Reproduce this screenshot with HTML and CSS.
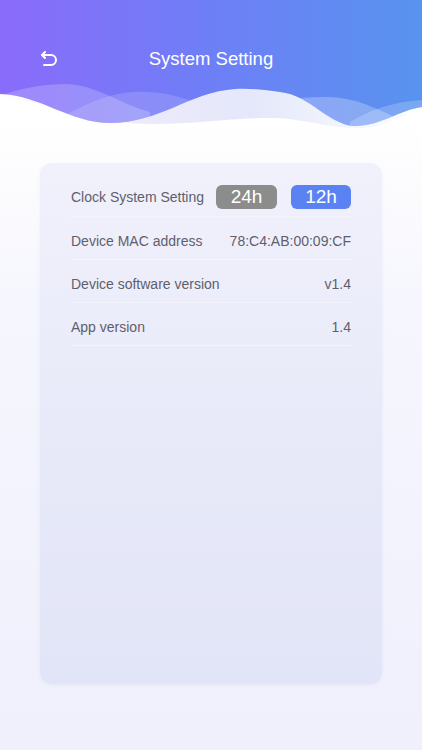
FILE: index.html
```html
<!DOCTYPE html>
<html lang="en">
<head>
    <meta charset="UTF-8">
    <meta name="viewport" content="width=device-width, initial-scale=1.0">
    <title>System Setting</title>
    <link rel="stylesheet" href="styles.css">
</head>
<body>
    <header class="header">
        <svg class="waves" width="422" height="130" viewBox="0 0 422 130">
            <defs>
                <linearGradient id="sky" x1="0" y1="0" x2="1" y2="0">
                    <stop offset="0" stop-color="#8a6bfb"/>
                    <stop offset="0.5" stop-color="#6e7ff6"/>
                    <stop offset="1" stop-color="#5893ef"/>
                </linearGradient>
                <linearGradient id="pale" x1="0" y1="0" x2="1" y2="0">
                    <stop offset="0" stop-color="#ffffff"/>
                    <stop offset="0.35" stop-color="#ebeafb"/>
                    <stop offset="0.6" stop-color="#e4e8fa"/>
                    <stop offset="1" stop-color="#ffffff"/>
                </linearGradient>
                <clipPath id="skyClip">
                    <path d="M0,0 H422 V107 C400,110 380,126 355,126 C330,126 310,95 280,92 C265,90 250,88 235,89 C190,92 160,123 110,123 C70,123 40,95 0,94 Z"/>
                </clipPath>
            </defs>
            <path fill="url(#pale)" d="M0,0 H422 V110 C395,118 380,130 350,128 C320,126 300,118 270,118 C230,118 200,124 150,124 C100,124 60,100 0,100 Z"/>
            <g clip-path="url(#skyClip)">
                <rect width="422" height="130" fill="url(#sky)"/>
                <path fill="#fff" opacity="0.2" d="M0,96 C20,88 45,84 65,84 C95,84 120,104 150,112 L150,130 L0,130 Z"/>
                <path fill="#fff" opacity="0.15" d="M60,118 C90,102 110,93 135,92 C160,91 180,96 205,106 L205,130 L60,130 Z"/>
                <path fill="#fff" opacity="0.25" d="M285,100 C305,97 325,96 340,98 C365,101 382,112 402,120 L402,130 L285,130 Z"/>
                <path fill="#fff" opacity="0.2" d="M350,122 C370,110 392,102 422,100 L422,130 L350,130 Z"/>
            </g>
        </svg>
        <div class="topbar">
            <svg class="back" width="20" height="16" viewBox="0 0 20 16">
                <path d="M3,4 H12 A5,5 0 0 1 12,14 H5" fill="none" stroke="#fff" stroke-width="2" stroke-linecap="round"/>
                <path d="M6,1 L3,4 L6,7" fill="none" stroke="#fff" stroke-width="2" stroke-linecap="round" stroke-linejoin="round"/>
            </svg>
            <h1 class="title">System Setting</h1>
        </div>
    </header>

    <main class="card">
        <div class="row">
            <span class="label">Clock System Setting</span>
            <div class="toggle">
                <span class="pill pill-off">24h</span>
                <span class="pill pill-on">12h</span>
            </div>
        </div>
        <div class="row">
            <span class="label">Device MAC address</span>
            <span class="value">78:C4:AB:00:09:CF</span>
        </div>
        <div class="row">
            <span class="label">Device software version</span>
            <span class="value">v1.4</span>
        </div>
        <div class="row">
            <span class="label">App version</span>
            <span class="value">1.4</span>
        </div>
    </main>
</body>
</html>
```

FILE: styles.css
```css
body {
    margin: 0;
    width: 422px;
    height: 750px;
    overflow: hidden;
    font-family: "Liberation Sans", Arial, sans-serif;
    background: linear-gradient(180deg, #ffffff 120px, #f6f6fe 300px, #eff0fc 750px);
    color: #5f5f6b;
}

.header {
    position: relative;
    height: 130px;
}

.waves {
    position: absolute;
    top: 0;
    left: 0;
    display: block;
}

.topbar {
    position: relative;
    display: flex;
    align-items: center;
    justify-content: center;
    height: 44px;
    padding-top: 37px;
}

.back {
    position: absolute;
    left: 39px;
    top: 51px;
}

.title {
    margin: 0;
    font-size: 18.5px;
    font-weight: normal;
    color: #fff;
}

.card {
    margin: 33px 40px 0;
    height: 521px;
    box-sizing: border-box;
    padding: 13px 31px 0;
    border-radius: 12px;
    background: linear-gradient(180deg, #f1f1fc 0%, #e8eaf9 50%, #e2e5f7 100%);
    box-shadow: 0 1px 3px rgba(140, 150, 210, 0.12);
}

.row {
    display: flex;
    align-items: center;
    justify-content: space-between;
    height: 43px;
    box-sizing: border-box;
    padding-top: 5px;
    border-bottom: 1px solid #f3f4fc;
    font-size: 14px;
}

.row:first-child {
    height: 41px;
    padding-top: 2px;
}

.toggle {
    display: flex;
    gap: 14px;
}

.pill {
    display: flex;
    align-items: center;
    justify-content: center;
    width: 61px;
    height: 24px;
    border-radius: 6px;
    color: #fff;
    font-size: 19px;
}

.pill-off {
    background: #8c8c8c;
}

.pill-on {
    width: 60px;
    background: #5b82f2;
}
```
